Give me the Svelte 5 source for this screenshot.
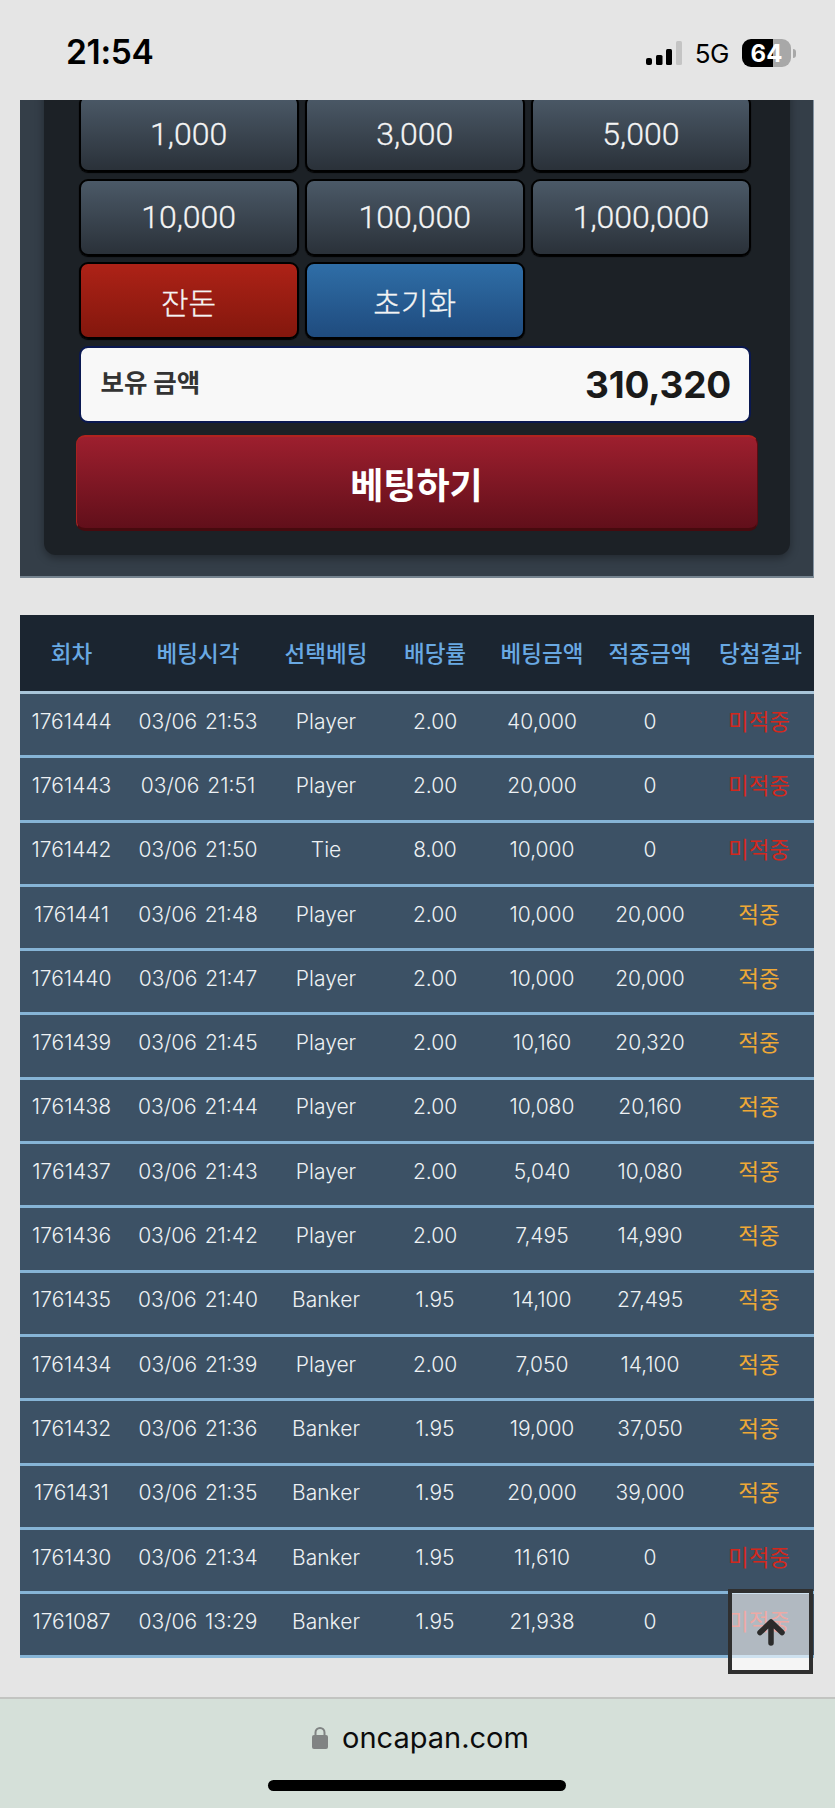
<script>
  const amounts = ['1,000', '3,000', '5,000', '10,000', '100,000', '1,000,000'];
  const columns = ['회차', '베팅시각', '선택베팅', '배당률', '베팅금액', '적중금액', '당첨결과'];
  const rows = [
    ['1761444', '03/06 21:53', 'Player', '2.00', '40,000', '0', false],
    ['1761443', '03/06 21:51', 'Player', '2.00', '20,000', '0', false],
    ['1761442', '03/06 21:50', 'Tie', '8.00', '10,000', '0', false],
    ['1761441', '03/06 21:48', 'Player', '2.00', '10,000', '20,000', true],
    ['1761440', '03/06 21:47', 'Player', '2.00', '10,000', '20,000', true],
    ['1761439', '03/06 21:45', 'Player', '2.00', '10,160', '20,320', true],
    ['1761438', '03/06 21:44', 'Player', '2.00', '10,080', '20,160', true],
    ['1761437', '03/06 21:43', 'Player', '2.00', '5,040', '10,080', true],
    ['1761436', '03/06 21:42', 'Player', '2.00', '7,495', '14,990', true],
    ['1761435', '03/06 21:40', 'Banker', '1.95', '14,100', '27,495', true],
    ['1761434', '03/06 21:39', 'Player', '2.00', '7,050', '14,100', true],
    ['1761432', '03/06 21:36', 'Banker', '1.95', '19,000', '37,050', true],
    ['1761431', '03/06 21:35', 'Banker', '1.95', '20,000', '39,000', true],
    ['1761430', '03/06 21:34', 'Banker', '1.95', '11,610', '0', false],
    ['1761087', '03/06 13:29', 'Banker', '1.95', '21,938', '0', false],
  ];
</script>

<div class="phone">
  <header class="status">
    <span class="clock">21:54</span>
    <div class="indicators">
      <svg class="signal" width="36" height="24" viewBox="0 0 36 24">
        <rect x="0" y="17" width="6" height="7" rx="2" fill="#000" />
        <rect x="10" y="14" width="6.5" height="10" rx="1.5" fill="#000" />
        <rect x="20" y="8" width="6" height="16" rx="1.5" fill="#000" />
        <rect x="30" y="0" width="6" height="24" rx="1.5" fill="#c4c4c4" />
      </svg>
      <span class="network">5G</span>
      <div class="battery"><span>64</span></div>
      <span class="nub"></span>
    </div>
  </header>

  <main class="content">
    <section class="panel">
      <div class="inner">
        <div class="chips">
          {#each amounts as amount (amount)}
            <button class="chip">{amount}</button>
          {/each}
          <button class="chip red">잔돈</button>
          <button class="chip blue">초기화</button>
        </div>
        <div class="balance">
          <span class="balance-label">보유 금액</span>
          <span class="balance-value">310,320</span>
        </div>
        <button class="bet">베팅하기</button>
      </div>
    </section>

    <table class="history">
      <thead>
        <tr>
          {#each columns as col (col)}
            <th>{col}</th>
          {/each}
        </tr>
      </thead>
      <tbody>
        {#each rows as row (row[0])}
          <tr>
            {#each row.slice(0, 6) as cell, i (i)}
              <td>{cell}</td>
            {/each}
            <td class={row[6] ? 'hit' : 'miss'}>{row[6] ? '적중' : '미적중'}</td>
          </tr>
        {/each}
      </tbody>
    </table>

    <button class="to-top" aria-label="top">
      <svg width="30" height="30" viewBox="0 0 30 30">
        <path d="M4 15.5 L15 5 L26 15.5 M15 7 V26" fill="none" stroke="#2b2b2b" stroke-width="5.5" stroke-linecap="round" stroke-linejoin="round" />
      </svg>
    </button>
  </main>

  <footer class="address">
    <div class="url">
      <svg width="16" height="23" viewBox="0 0 16 23">
        <path d="M3.5 10 V6.5 a4.5 4.5 0 0 1 9 0 V10" fill="none" stroke="#808383" stroke-width="2" />
        <rect x="0" y="9" width="16" height="14" rx="2" fill="#808383" />
      </svg>
      <span>oncapan.com</span>
    </div>
    <div class="home"></div>
  </footer>
</div>

<style>
  :global(body) {
    background: #e5e5e5;
  }
  .phone {
    display: flex;
    flex-direction: column;
    width: 835px;
    height: 1808px;
    overflow: hidden;
    background: #e5e5e5;
    font-family: Inter, 'Noto Sans CJK KR', sans-serif;
  }
  .status {
    display: flex;
    align-items: flex-start;
    justify-content: space-between;
    height: 100px;
    flex-shrink: 0;
    box-sizing: border-box;
    padding: 34px 39px 0 66px;
    position: relative;
    z-index: 2;
    background: #e5e5e5;
  }
  .clock {
    font-family: Inter, sans-serif;
    font-size: 33.5px;
    font-weight: 600;
    line-height: 36px;
    letter-spacing: -0.3px;
    color: #000;
  }
  .indicators {
    display: flex;
    align-items: center;
    height: 28px;
    margin-top: 5px;
  }
  .network {
    margin-left: 13px;
    font-family: Inter, sans-serif;
    font-size: 26px;
    font-weight: 400;
    letter-spacing: -0.5px;
    color: #000;
  }
  .battery {
    display: flex;
    align-items: center;
    justify-content: center;
    width: 49px;
    height: 28px;
    margin-left: 13px;
    border-radius: 9px;
    background: linear-gradient(90deg, #000 63%, #a8a8a8 63%);
    color: #fff;
    font-family: Inter, sans-serif;
    font-size: 24px;
    font-weight: 700;
  }
  .nub {
    width: 3px;
    height: 9px;
    margin-left: 2px;
    border-radius: 0 3px 3px 0;
    background: #a8a8a8;
  }
  .content {
    position: relative;
    flex: 1;
    min-height: 0;
    overflow: hidden;
  }
  .panel {
    margin: -12px 21px 0 20px;
    padding: 0 23px 21px 24px;
    background: #343e48;
    border-right: 1px solid #8493a1;
    border-bottom: 2px solid #75838f;
  }
  .inner {
    padding: 7px 39px 24px 34.5px;
    background: #1c2126;
    border-radius: 0 0 12px 12px;
    box-shadow: 0 3px 8px rgba(0, 0, 0, 0.35);
  }
  .chips {
    display: grid;
    grid-template-columns: repeat(3, 1fr);
    grid-auto-rows: 77px;
    gap: 6.5px 6px;
  }
  .chip {
    padding: 0;
    box-sizing: border-box;
    border: 2px solid #000;
    border-radius: 9px;
    background: linear-gradient(180deg, #4b5967, #2a3139);
    box-shadow: 0 1px 1px #000;
    color: #f4f4f4;
    font-family: Roboto, 'Noto Sans CJK KR', sans-serif;
    font-size: 32px;
    font-weight: 300;
    -webkit-text-stroke: 0.3px #f4f4f4;
  }
  .chip.red {
    background: linear-gradient(180deg, #ad2217, #83170d);
    font-size: 30px;
  }
  .chip.blue {
    background: linear-gradient(180deg, #2f6ea7, #1f4b7e);
    font-size: 30px;
  }
  .balance {
    display: flex;
    align-items: center;
    justify-content: space-between;
    box-sizing: border-box;
    height: 77px;
    margin-top: 7px;
    padding: 0 18px 0 20px;
    border: 2px solid #0a1850;
    border-radius: 9px;
    background: #f8f8f8;
  }
  .balance-label {
    margin-top: -8px;
    color: #333;
    font-family: 'Noto Sans CJK KR', sans-serif;
    font-size: 25.5px;
    font-weight: 700;
  }
  .balance-value {
    color: #1a1a1a;
    font-family: Inter, sans-serif;
    font-size: 37px;
    font-weight: 700;
    letter-spacing: -0.2px;
  }
  .bet {
    display: block;
    box-sizing: border-box;
    width: 682px;
    height: 96px;
    margin: 12px 0 0 -3px;
    padding: 0;
    border: 1px solid #5a0c12;
    border-top: 2px solid #b0231f;
    border-left: 1px solid #a52320;
    border-bottom: 3px solid #470a0e;
    border-radius: 9px;
    background: linear-gradient(180deg, #9d1f2e, #610f1a);
    color: #fff;
    font-family: 'Noto Sans CJK KR', sans-serif;
    font-size: 36px;
    font-weight: 700;
  }
  .history {
    width: 794px;
    margin: 37px 0 0 20px;
    border-collapse: collapse;
    table-layout: fixed;
  }
  .history th:nth-child(1) { width: 103px; }
  .history th:nth-child(2) { width: 150px; }
  .history th:nth-child(3) { width: 106px; }
  .history th:nth-child(4) { width: 112px; }
  .history th:nth-child(5) { width: 102px; }
  .history th:nth-child(6) { width: 114px; }
  .history th {
    height: 73px;
    padding: 0 0 3px;
    background: #1b2530;
    color: #69a9e3;
    font-family: 'Noto Sans CJK KR', sans-serif;
    font-size: 22.5px;
    font-weight: 500;
    border-bottom: 3px solid #a9c5d9;
  }
  .history td {
    height: 54.3px;
    padding: 0 0 7px;
    background: #3c5165;
    color: #eef1f4;
    font-size: 21px;
    font-weight: 300;
    word-spacing: 2px;
    text-align: center;
    border-bottom: 3px solid #86b4d6;
  }
  .history td.miss,
  .history td.hit {
    height: 51.3px;
    padding: 0 3px 10px 0;
    line-height: 30px;
    font-family: 'Noto Sans CJK KR', sans-serif;
    font-size: 22.5px;
    font-weight: 400;
  }
  .history td.miss {
    color: #d2281d;
  }
  .history td.hit {
    color: #efa836;
  }
  .to-top {
    position: absolute;
    left: 728px;
    top: 1489px;
    width: 85px;
    height: 85px;
    padding: 0;
    box-sizing: border-box;
    border: 4px solid #2f2f2f;
    background: rgba(255, 255, 255, 0.6);
    display: flex;
    align-items: center;
    justify-content: center;
  }
  .address {
    position: relative;
    height: 111px;
    flex-shrink: 0;
    box-sizing: border-box;
    border-top: 2px solid #c2c4c1;
    background: #d5e0d9;
  }
  .url {
    display: flex;
    align-items: center;
    justify-content: center;
    gap: 14px;
    height: 76px;
    padding-left: 6px;
    color: #0c0c0c;
    font-family: Inter, sans-serif;
    font-size: 29px;
  }
  .home {
    width: 298px;
    height: 11px;
    margin: 5px 0 0 268px;
    border-radius: 6px;
    background: #000;
  }
</style>
